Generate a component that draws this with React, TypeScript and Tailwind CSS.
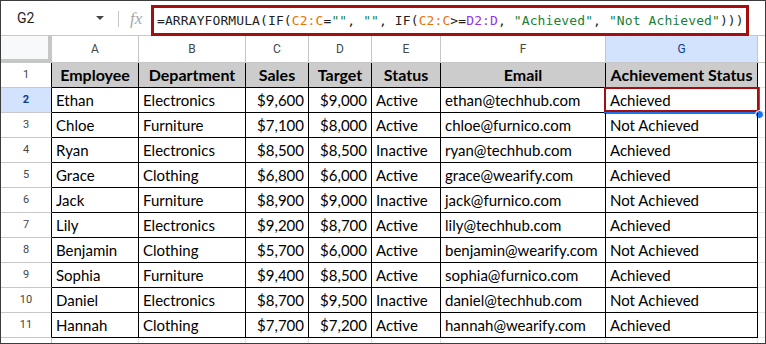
import React from "react";

const rows: string[][] = [
  ["Ethan", "Electronics", "$9,600", "$9,000", "Active", "ethan@techhub.com", "Achieved"],
  ["Chloe", "Furniture", "$7,100", "$8,000", "Active", "chloe@furnico.com", "Not Achieved"],
  ["Ryan", "Electronics", "$8,500", "$8,500", "Inactive", "ryan@techhub.com", "Achieved"],
  ["Grace", "Clothing", "$6,800", "$6,000", "Active", "grace@wearify.com", "Achieved"],
  ["Jack", "Furniture", "$8,900", "$9,000", "Inactive", "jack@furnico.com", "Not Achieved"],
  ["Lily", "Electronics", "$9,200", "$8,700", "Active", "lily@techhub.com", "Achieved"],
  ["Benjamin", "Clothing", "$5,700", "$6,000", "Active", "benjamin@wearify.com", "Not Achieved"],
  ["Sophia", "Furniture", "$9,400", "$8,500", "Active", "sophia@furnico.com", "Achieved"],
  ["Daniel", "Electronics", "$8,700", "$9,500", "Inactive", "daniel@techhub.com", "Not Achieved"],
  ["Hannah", "Clothing", "$7,700", "$7,200", "Active", "hannah@wearify.com", "Achieved"],
];

const headers = ["Employee", "Department", "Sales", "Target", "Status", "Email", "Achievement Status"];
const letters = ["A", "B", "C", "D", "E", "F", "G"];

const dataFont = { fontFamily: "Lato, 'Noto Sans', sans-serif" };

export default function App() {
  return (
    <div className="w-[766px] h-[344px] border border-[#3c3c3c] bg-white flex flex-col overflow-hidden">
      {/* Formula bar */}
      <div className="h-[35px] shrink-0 border-b border-[#c7c7c7] flex items-start">
        <div className="w-[117px] h-[34px] flex items-center justify-between pl-[16px] pr-[14px]">
          <span className="text-[14px] text-[#1f1f1f]" style={{ fontFamily: "Roboto, sans-serif" }}>G2</span>
          <span className="w-0 h-0 border-l-[4px] border-r-[4px] border-t-[4px] border-l-transparent border-r-transparent border-t-[#444746]" />
        </div>
        <div className="w-px h-[16px] mt-[10px] bg-[#c4c7c5]" />
        <div className="w-[32px] h-[34px] flex items-center pl-[11px]">
          <span className="text-[17px] italic text-[#a8a8a8] leading-none" style={{ fontFamily: "'Liberation Serif', serif" }}>fx</span>
        </div>
        <div className="relative w-[598px] h-[31px] mt-[4px] border-[3px] border-[#a50e0e] bg-white flex items-center pl-[3px]">
          <span className="text-[13px] tracking-[0.1px] whitespace-pre text-[#1f1f1f]" style={{ fontFamily: "'DejaVu Sans Mono', monospace" }}>
            =ARRAYFORMULA(IF(<span className="text-[#e8710a]">C2:C</span>=<span className="text-[#188038]">""</span>, <span className="text-[#188038]">""</span>, IF(<span className="text-[#e8710a]">C2:C</span>&gt;=<span className="text-[#9334e6]">D2:D</span>, <span className="text-[#188038]">"Achieved"</span>, <span className="text-[#188038]">"Not Achieved"</span>)))
          </span>
        </div>
      </div>

      {/* Grid */}
      <div className="grid grid-cols-[51px_87px_107px_63px_63px_69px_165px_152px_1fr]">
        {/* Column letters row */}
        <div className="h-[27px] bg-[#f8f9fa] border-r-4 border-b-4 border-[#c4c7c5]" />
        {letters.map((l) => (
          <div
            key={l}
            className={`h-[27px] flex items-center justify-center border-r border-b border-[#c7c7c7] text-[12px] ${l === "G" ? "bg-[#d3e3fd] text-[#0b3d91]" : "bg-white text-[#444746]"}`}
            style={{ fontFamily: "Roboto, sans-serif" }}
          >
            {l}
          </div>
        ))}
        <div className="h-[27px] border-b border-[#c7c7c7]" />

        {/* Header row 1 */}
        <div className="h-[25px] flex items-center justify-center border-r border-r-black border-b border-b-[#c7c7c7] text-[11px] text-[#444746]" style={{ fontFamily: "Roboto, sans-serif" }}>1</div>
        {headers.map((h) => (
          <div key={h} className="h-[25px] flex items-center justify-center bg-[#cccccc] border-r border-b border-black text-[16px] font-bold text-black whitespace-nowrap" style={dataFont}>
            {h}
          </div>
        ))}
        <div className="h-[25px] border-b border-[#e2e2e2]" />

        {rows.map((r, i) => {
          const n = i + 2;
          const sel = n === 2;
          return (
            <React.Fragment key={n}>
              <div
                className={`h-[25px] flex items-center justify-center border-r border-r-black border-b border-b-[#c7c7c7] text-[11px] ${sel ? "bg-[#d3e3fd] text-[#0b3d91] font-bold" : "text-[#444746]"}`}
                style={{ fontFamily: "Roboto, sans-serif" }}
              >
                {n}
              </div>
              {r.map((c, j) => {
                const right = j === 2 || j === 3;
                return (
                  <div
                    key={j}
                    className={`relative h-[25px] flex items-center border-r border-b border-black text-[15px] text-black whitespace-nowrap ${right ? "justify-end pr-[4px]" : "pl-[4px]"}`}
                    style={dataFont}
                  >
                    {c}
                    {sel && j === 6 && (
                      <>
                        <div className="absolute -left-[2px] -top-[1px] -right-[3px] -bottom-[2px] border-2 border-[#1a73e8]" />
                        <div className="absolute -left-[2px] -top-[1px] -right-[2px] bottom-0 border-2 border-[#a50e0e]" />
                        <div className="absolute -right-[7px] -bottom-[7px] w-[9px] h-[9px] rounded-full bg-[#1a73e8] border border-white" />
                      </>
                    )}
                  </div>
                );
              })}
              <div className="h-[25px] border-b border-[#e2e2e2]" />
            </React.Fragment>
          );
        })}

        {/* partial row 12 */}
        <div className="h-[5px] border-r border-[#c7c7c7]" />
        {letters.map((l) => (
          <div key={l} className="h-[5px] border-r border-[#e2e2e2]" />
        ))}
        <div className="h-[5px]" />
      </div>
    </div>
  );
}
